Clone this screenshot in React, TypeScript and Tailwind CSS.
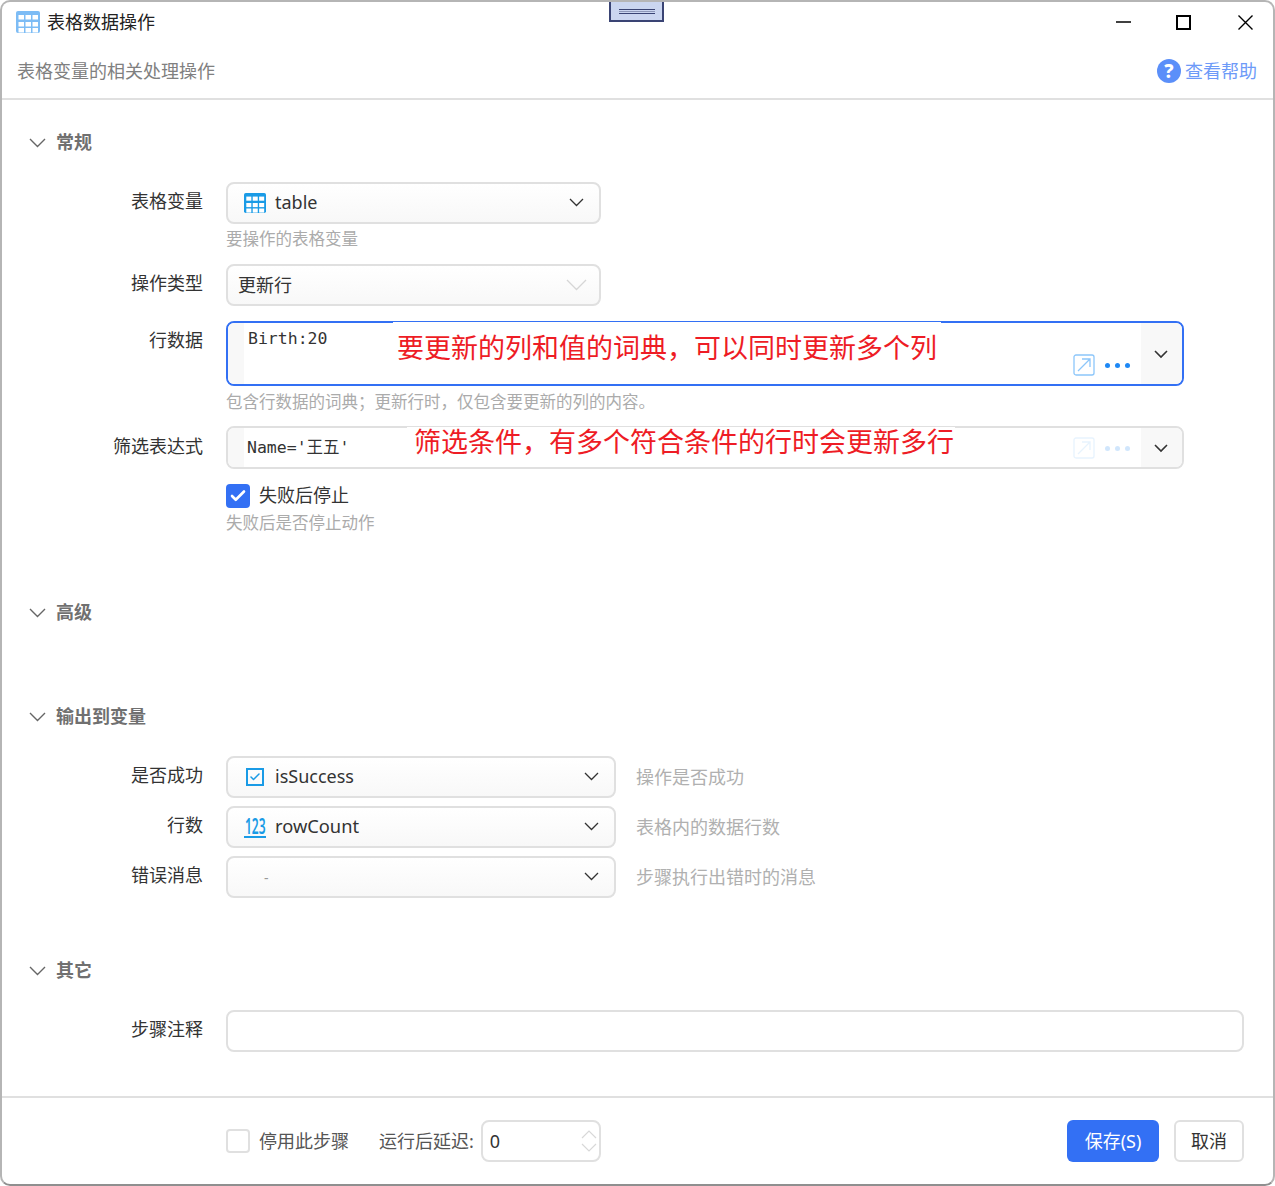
import { ReactNode } from "react";
import { Check } from "lucide-react";

const uiFont = "font-['Noto_Sans','Noto_Sans_CJK_SC',sans-serif]";
const monoFont = "font-['DejaVu_Sans_Mono','Noto_Sans_CJK_SC',monospace]";

function Chevron({ width, color, stroke = 1.5, className = "" }: { width: number; color: string; stroke?: number; className?: string }) {
  const h = width / 2 + 2;
  return (
    <svg width={width} height={h} viewBox={`0 0 ${width} ${h}`} fill="none" stroke={color} strokeWidth={stroke} className={className}>
      <path d={`M1 1 ${width / 2} ${h - 2} ${width - 1} 1`} />
    </svg>
  );
}

function TableIcon({ color, size }: { color: string; size: number }) {
  return (
    <svg width={size} height={size} viewBox="0 0 24 24">
      <rect x="0" y="1" width="24" height="22" rx="2" fill={color} />
      {[5, 12, 18].map((y) =>
        [2.5, 9.5, 16.5].map((x) => <rect key={`${x}-${y}`} x={x} y={y} width="5.5" height="4.5" fill="#fff" />)
      )}
    </svg>
  );
}

function SectionHeader({ title, className }: { title: string; className: string }) {
  return (
    <div className={`flex h-6 items-center pl-[27px] ${className}`}>
      <Chevron width={17} color="#666" stroke={1.4} className="mt-[2px]" />
      <span className="ml-[10px] text-[18px] font-bold text-[#707070]">{title}</span>
    </div>
  );
}

function FormRow({ label, children, className = "", top = false }: { label: string; children: ReactNode; className?: string; top?: boolean }) {
  return (
    <div className={`flex ${top ? "items-start" : "items-center"} ${className}`}>
      <label className={`w-[201px] shrink-0 text-right text-[18px] text-[#333] ${top ? "pt-[6px]" : "pb-[3px]"}`}>{label}</label>
      <div className="ml-[23px] min-w-0 flex-1">{children}</div>
    </div>
  );
}

function Hint({ text, className = "" }: { text: string; className?: string }) {
  return <div className={`ml-[224px] h-6 text-[16.5px] leading-6 text-[#ababab] ${className}`}>{text}</div>;
}

function SelectBox({ width, children, faint = false }: { width: string; children: ReactNode; faint?: boolean }) {
  return (
    <div className={`flex h-[42px] items-center rounded-lg border-2 border-[#e0e0e0] bg-linear-to-b from-white to-[#f8f8f8] pr-[15px] ${width}`}>
      <div className="flex min-w-0 flex-1 items-center text-[18px] text-[#333]">{children}</div>
      {faint ? <Chevron width={21} color="#d6d6d6" stroke={1.3} className="-mr-[3px] mt-[1px]" /> : <Chevron width={15} color="#333" stroke={1.3} />}
    </div>
  );
}

function CodeField({ height, faint, children }: { height: string; faint?: boolean; children: ReactNode }) {
  return (
    <div className={`flex overflow-hidden rounded-lg border-2 bg-white ${height} ${faint ? "border-[#e0e0e0]" : "border-[#3370f4]"}`}>
      <div className="w-4 shrink-0 bg-[#f8f8f8]" />
      <div className={`min-w-0 flex-1 pl-[3px] text-[16.5px] text-[#333] ${monoFont}`}>{children}</div>
      <div className={`flex items-end gap-[10px] pb-[8px] pr-[11px] ${faint ? "opacity-20" : ""} `}>
        <svg width="22" height="22" viewBox="0 0 22 22" fill="none" stroke="#8cc6fa" strokeWidth="1.3">
          <rect x="1" y="1" width="20" height="20" rx="2" />
          <path d="M5 17 17 5M9 5h8v8" />
        </svg>
        <div className="mb-[8px] flex gap-[5px]">
          <span className="h-[5px] w-[5px] rounded-full bg-[#1e88f5]" />
          <span className="h-[5px] w-[5px] rounded-full bg-[#1e88f5]" />
          <span className="h-[5px] w-[5px] rounded-full bg-[#1e88f5]" />
        </div>
      </div>
      <div className="flex w-[41px] shrink-0 items-center justify-center bg-[#f8f8f8]">
        <Chevron width={14} color="#333" stroke={1.6} className="-ml-[2px] mt-[1px]" />
      </div>
    </div>
  );
}

function OutputRow({ label, hint, children }: { label: string; hint: string; children: ReactNode }) {
  return (
    <FormRow label={label}>
      <div className="flex items-center">
        <SelectBox width="w-[390px]">{children}</SelectBox>
        <span className="ml-[20px] text-[18px] text-[#b0b0b0]">{hint}</span>
      </div>
    </FormRow>
  );
}

export default function App() {
  return (
    <div className={`relative flex h-[1186px] w-[1275px] flex-col overflow-hidden rounded-[10px] border-2 border-[#b5b5b5] border-b-[#8f8f8f] bg-white ${uiFont}`}>
      {/* drag handle */}
      <div className="absolute left-[607px] top-[-2px] flex h-[22px] w-[55px] flex-col items-center justify-center gap-[1px] border-2 border-[#3a4474] bg-[#cbd6f0]">
        <div className="h-[1px] w-9 bg-[#3a4474]" />
        <div className="h-[1px] w-9 bg-[#8d97b8]" />
        <div className="h-[1px] w-9 bg-[#3a4474]" />
      </div>

      {/* Title bar */}
      <div className="flex h-10 shrink-0 items-center pl-[14px] pr-[20px]">
        <TableIcon color="#7dbcf5" size={24} />
        <span className="ml-[7px] text-[18px] text-[#222]">表格数据操作</span>
        <div className="ml-auto flex items-center text-black">
          <svg width="15" height="15" viewBox="0 0 15 15" stroke="currentColor" strokeWidth="1.5"><path d="M0 7h15" /></svg>
          <svg width="15" height="15" viewBox="0 0 15 15" fill="none" stroke="currentColor" strokeWidth="2" className="ml-[45px]"><rect x="1" y="1" width="13" height="13" /></svg>
          <svg width="15" height="15" viewBox="0 0 15 15" stroke="currentColor" strokeWidth="1.4" className="ml-[47px]"><path d="M.5.5l14 14M14.5.5l-14 14" /></svg>
        </div>
      </div>
      <div className="flex h-[58px] shrink-0 items-center justify-between border-b-2 border-[#e0e0e0] pl-[15px] pr-[16px] pt-[2px]">
        <span className="text-[18px] text-[#808080]">表格变量的相关处理操作</span>
        <span className="flex items-center gap-[4px] text-[18px] text-[#6d9af8]">
          <span className="flex h-6 w-6 items-center justify-center rounded-full bg-[#5b8ff9] text-[19px] font-extrabold leading-none text-white">?</span>
          查看帮助
        </span>
      </div>

      {/* Form */}
      <div className="flex min-h-0 flex-1 flex-col">
        <SectionHeader title="常规" className="mt-[30px]" />
        <FormRow label="表格变量" className="mt-[28px]">
          <SelectBox width="w-[375px]">
            <span className="ml-[16px] mr-[9px] flex"><TableIcon color="#1a9be6" size={22} /></span>
            <span className="-mt-[2px]">table</span>
          </SelectBox>
        </FormRow>
        <Hint text="要操作的表格变量" className="mt-[3px]" />
        <FormRow label="操作类型" className="mt-[13px]">
          <SelectBox width="w-[375px]" faint>
            <span className="ml-[10px]">更新行</span>
          </SelectBox>
        </FormRow>
        <FormRow label="行数据" top className="mt-[15px]">
          <div className="relative mr-[89px]">
            <CodeField height="h-[65px]">
              <div className="pl-[1px] pt-[4px] leading-6">Birth:20</div>
            </CodeField>
            <div className="absolute left-[167px] top-[1px] h-[50px] w-[548px] bg-white pl-[4px] pt-[2px] text-[27px] leading-[48px] text-[#ee1c25]">要更新的列和值的词典，可以同时更新多个列</div>
          </div>
        </FormRow>
        <Hint text="包含行数据的词典；更新行时，仅包含要更新的列的内容。" className="mt-[4px]" />
        <FormRow label="筛选表达式" className="mt-[12px]">
          <div className="relative mr-[89px]">
            <CodeField height="h-[43px]" faint>
              <div className="leading-[39px]">Name='王五'</div>
            </CodeField>
            <div className="absolute left-[181px] top-[1px] h-[34px] w-[548px] bg-white pl-[7px] text-[27px] leading-[30px] text-[#ee1c25]">筛选条件，有多个符合条件的行时会更新多行</div>
          </div>
        </FormRow>
        <div className="ml-[224px] mt-[15px] flex h-6 items-center">
          <span className="flex h-6 w-6 items-center justify-center rounded bg-[#3370f4]">
            <Check size={18} strokeWidth={3.5} className="text-white" />
          </span>
          <span className="ml-[9px] pb-[2px] text-[18px] text-[#333]">失败后停止</span>
        </div>
        <Hint text="失败后是否停止动作" className="mt-[3px]" />

        <SectionHeader title="高级" className="mt-[65px]" />
        <SectionHeader title="输出到变量" className="mt-[80px]" />

        <div className="mt-[28px] flex flex-col gap-2">
          <OutputRow label="是否成功" hint="操作是否成功">
            <span className="ml-[18px] mr-[11px] flex h-[18px] w-[18px] items-center justify-center border-2 border-[#1a9be6]">
              <Check size={12} strokeWidth={3} className="text-[#1a9be6]" />
            </span>
            <span className="-mt-[2px]">isSuccess</span>
          </OutputRow>
          <OutputRow label="行数" hint="表格内的数据行数">
            <svg width="23" height="22" viewBox="0 0 23 22" className="ml-[16px] mr-[8px]">
              <text transform="translate(1 18) scale(1 1.85)" fontSize="12" fontWeight="600" fill="#1a9be6">123</text>
              <rect x="0" y="20" width="22" height="2" fill="#1a9be6" />
            </svg>
            <span className="-mt-[2px] text-[18.3px]">rowCount</span>
          </OutputRow>
          <OutputRow label="错误消息" hint="步骤执行出错时的消息">
            <span className="ml-[36px] text-[14px] text-[#999]">-</span>
          </OutputRow>
        </div>

        <SectionHeader title="其它" className="mt-[60px]" />
        <FormRow label="步骤注释" className="mt-[28px]">
          <div className="mr-[29px] h-[42px] rounded-lg border-2 border-[#e0e0e0] bg-white" />
        </FormRow>
      </div>

      {/* Footer */}
      <div className="flex h-[88px] shrink-0 items-start border-t-2 border-[#e0e0e0] pl-[224px] pr-[29px] pt-[22px]">
        <div className="flex h-[42px] items-center">
          <span className="h-6 w-6 rounded border-2 border-[#e0e0e0] bg-white" />
          <span className="ml-[9px] text-[18px] text-[#555]">停用此步骤</span>
          <span className="ml-[30px] text-[18px] text-[#555]">运行后延迟:</span>
          <div className="ml-[7px] flex h-[42px] w-[120px] items-center justify-between rounded-lg border-2 border-[#e0e0e0] pl-[7px] pr-[1px] text-[18px] text-[#333]">
            0
            <svg width="18" height="26" viewBox="0 0 18 26" fill="none" stroke="#d8d8d8" strokeWidth="1.2">
              <path d="M2 10 9 3l7 7M2 16l7 7 7-7" />
            </svg>
          </div>
        </div>
        <button className="ml-auto h-[42px] w-[92px] rounded-md bg-[#3370f4] text-[18px] text-white">保存(S)</button>
        <button className="ml-[15px] h-[42px] w-[70px] rounded-md border-2 border-[#e0e0e0] bg-white text-[18px] text-[#333]">取消</button>
      </div>
    </div>
  );
}
